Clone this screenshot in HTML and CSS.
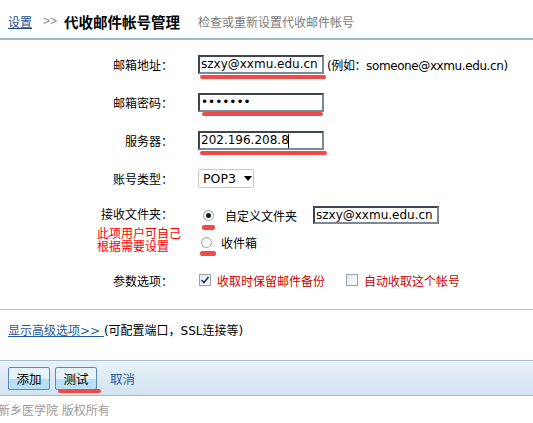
FILE: index.html
```html
<!DOCTYPE html>
<html lang="zh-CN">
<head>
    <meta charset="UTF-8">
    <title>代收邮件帐号管理</title>
    <link rel="stylesheet" href="styles.css">
</head>
<body>

    <div class="head">
        <a href="#" class="crumb">设置</a>
        <span class="sep">&gt;&gt;</span>
        <span class="title">代收邮件帐号管理</span>
        <span class="desc">检查或重新设置代收邮件帐号</span>
    </div>

    <div class="form">
        <div class="row">
            <label class="lbl">邮箱地址：</label>
            <span class="field">
                <input class="txt" type="text" value="szxy@xxmu.edu.cn">
                <i class="mark mark-1"></i>
            </span>
            <span class="hint">(例如：someone@xxmu.edu.cn)</span>
        </div>

        <div class="row">
            <label class="lbl">邮箱密码：</label>
            <span class="field">
                <input class="txt" type="password" value="1234567">
                <i class="mark mark-2"></i>
            </span>
        </div>

        <div class="row">
            <label class="lbl">服务器：</label>
            <span class="field">
                <input class="txt" type="text" value="202.196.208.8"><i class="caret"></i>
                <i class="mark mark-3"></i>
            </span>
        </div>

        <div class="row">
            <label class="lbl">账号类型：</label>
            <span class="select">POP3 <i class="arrow"></i></span>
        </div>

        <div class="row row-folder">
            <label class="lbl lbl-folder">接收文件夹：</label>
            <div class="choices">
                <div class="choice">
                    <span class="field">
                        <span class="radio checked"></span>
                        <i class="mark mark-r1"></i>
                    </span>
                    <span class="choice-text">自定义文件夹</span>
                    <input class="txt txt-folder" type="text" value="szxy@xxmu.edu.cn">
                </div>
                <div class="choice choice-2">
                    <span class="field">
                        <span class="radio"></span>
                        <i class="mark mark-r2"></i>
                    </span>
                    <span class="choice-text">收件箱</span>
                </div>
            </div>
            <span class="note">此项用户可自己<br>根据需要设置</span>
        </div>

        <div class="row">
            <label class="lbl">参数选项：</label>
            <span class="check checked">
                <svg width="10" height="10" viewBox="0 0 10 10"><path d="M1.5 5 L4 7.5 L8.5 2" fill="none" stroke="#1c2f8c" stroke-width="1.6"/></svg>
            </span>
            <span class="check-text">收取时保留邮件备份</span>
            <span class="check check-2"></span>
            <span class="check-text">自动收取这个帐号</span>
        </div>
    </div>

    <div class="advanced">
        <a href="#" class="adv-link">显示高级选项&gt;&gt; </a>(可配置端口，SSL连接等)
    </div>

    <div class="bar">
        <button class="btn">添加</button>
        <span class="field">
            <button class="btn">测试</button>
            <i class="mark mark-btn"></i>
        </span>
        <a href="#" class="cancel">取消</a>
    </div>

    <div class="foot">新乡医学院 版权所有</div>

</body>
</html>
```

FILE: styles.css
```css
body {
    margin: 0;
    font-family: "DejaVu Sans", "Noto Sans CJK SC", sans-serif;
    font-size: 12px;
    color: #000;
    background: #fff;
}

/* header */
.head {
    height: 40px;
    box-sizing: border-box;
    padding: 4px 0 0 8px;
    border-bottom: 2px solid #9fb7cc;
    display: flex;
    align-items: center;
}

.crumb {
    color: #1a4f8b;
    text-decoration: underline;
}

.sep {
    font-family: "Liberation Sans", sans-serif;
    color: #8a8a8a;
    margin: 0 7px 0 11px;
}

.title {
    font-size: 14.5px;
    font-weight: bold;
    margin-right: 18px;
}

.desc {
    color: #7a7a7a;
}

/* form */
.form {
    padding-top: 5px;
}

.row {
    display: flex;
    align-items: center;
    height: 38px;
    position: relative;
}

.lbl {
    flex: none;
    width: 173px;
    margin-right: 25px;
    text-align: right;
}

.field {
    position: relative;
    display: inline-flex;
    align-items: center;
}

.txt {
    width: 126px;
    height: 19px;
    box-sizing: border-box;
    padding: 0 1px;
    margin: 0;
    border: 2px solid;
    border-color: #3d4650 #7a8897 #7a8897 #3d4650;
    font-family: "DejaVu Sans", sans-serif;
    font-size: 12px;
    color: #000;
    outline: none;
}

.caret {
    position: absolute;
    left: 90px;
    top: 3px;
    width: 1px;
    height: 14px;
    background: #000;
}

.hint {
    margin-left: 3px;
    letter-spacing: -0.4px;
}

.mark {
    position: absolute;
    height: 4px;
    border-radius: 2px;
    background: #f24848;
}

.mark-1 { left: 2px; top: 20px; width: 126px; }
.mark-2 { left: 4px; top: 19px; width: 121px; }
.mark-3 { left: 2px; top: 20px; width: 127px; }
.mark-r1 { left: -1px; top: 15px; width: 13px; height: 5px; }
.mark-r2 { left: -1px; top: 14px; width: 16px; height: 5px; }
.mark-btn { left: 3px; top: 22px; width: 43px; }

.select {
    width: 56px;
    height: 19px;
    box-sizing: border-box;
    border: 1px solid #c8c8c8;
    border-radius: 2px;
    display: flex;
    align-items: center;
    padding-left: 4px;
    font-size: 12.5px;
}

.arrow {
    margin-left: 8px;
    border-left: 4px solid transparent;
    border-right: 4px solid transparent;
    border-top: 5px solid #000;
}

/* folder choice */
.row-folder {
    height: 64px;
    align-items: flex-start;
}

.lbl-folder {
    line-height: 36px;
}

.choice {
    display: flex;
    align-items: center;
    height: 36px;
    padding-left: 5px;
}

.choice-2 {
    height: 18px;
    padding-left: 3px;
}

.radio {
    width: 11px;
    height: 11px;
    box-sizing: border-box;
    border-radius: 50%;
    border: 1px solid #9aa3ad;
    background: radial-gradient(circle at 60% 60%, #fff 40%, #e4e8ec 100%);
    display: inline-flex;
    align-items: center;
    justify-content: center;
}

.radio.checked::after {
    content: "";
    width: 5px;
    height: 5px;
    border-radius: 50%;
    background: #1a1a1a;
}

.choice-text {
    margin-left: 11px;
}

.choice-2 .choice-text {
    margin-left: 9px;
}

.txt-folder {
    margin-left: 16px;
    height: 18px;
}

.note {
    position: absolute;
    left: 97px;
    top: 31px;
    color: #ff0000;
    line-height: 12.5px;
}

/* options */
.check {
    width: 12px;
    height: 12px;
    box-sizing: border-box;
    border: 1px solid #9aa0a8;
    background: linear-gradient(135deg, #e3e6ea, #fff);
    display: inline-flex;
    align-items: center;
    justify-content: center;
    margin-left: 1px;
}

.check-2 {
    margin-left: 21px;
}

.check-text {
    color: #cc0000;
    margin-left: 6px;
}

/* advanced */
.advanced {
    margin-top: 10px;
    border-top: 1px solid #b3c4d3;
    padding: 11px 0 19px 8px;
    line-height: 20px;
}

.adv-link {
    color: #1e5c9e;
    text-decoration: underline;
}

/* button bar */
.bar {
    height: 34px;
    border-top: 1px solid #a5bccf;
    border-bottom: 1px solid #a5bccf;
    background: linear-gradient(#e9f2f9, #d2e3f0);
    display: flex;
    align-items: center;
    padding-left: 8px;
}

.btn {
    width: 42px;
    height: 23px;
    margin-right: 5px;
    padding: 0;
    border: 1px solid #5b89b5;
    border-radius: 2px;
    background: linear-gradient(#e4f3fc 50%, #b9dff5 50%);
    font-family: "Noto Sans CJK SC", sans-serif;
    font-size: 12.5px;
    font-weight: 400;
    color: #000;
}

.cancel {
    margin-left: 8px;
    color: #1e5c9e;
    text-decoration: none;
    font-size: 12.5px;
}

.foot {
    height: 28px;
    line-height: 30px;
    margin-left: -2px;
    color: #999;
}
```
